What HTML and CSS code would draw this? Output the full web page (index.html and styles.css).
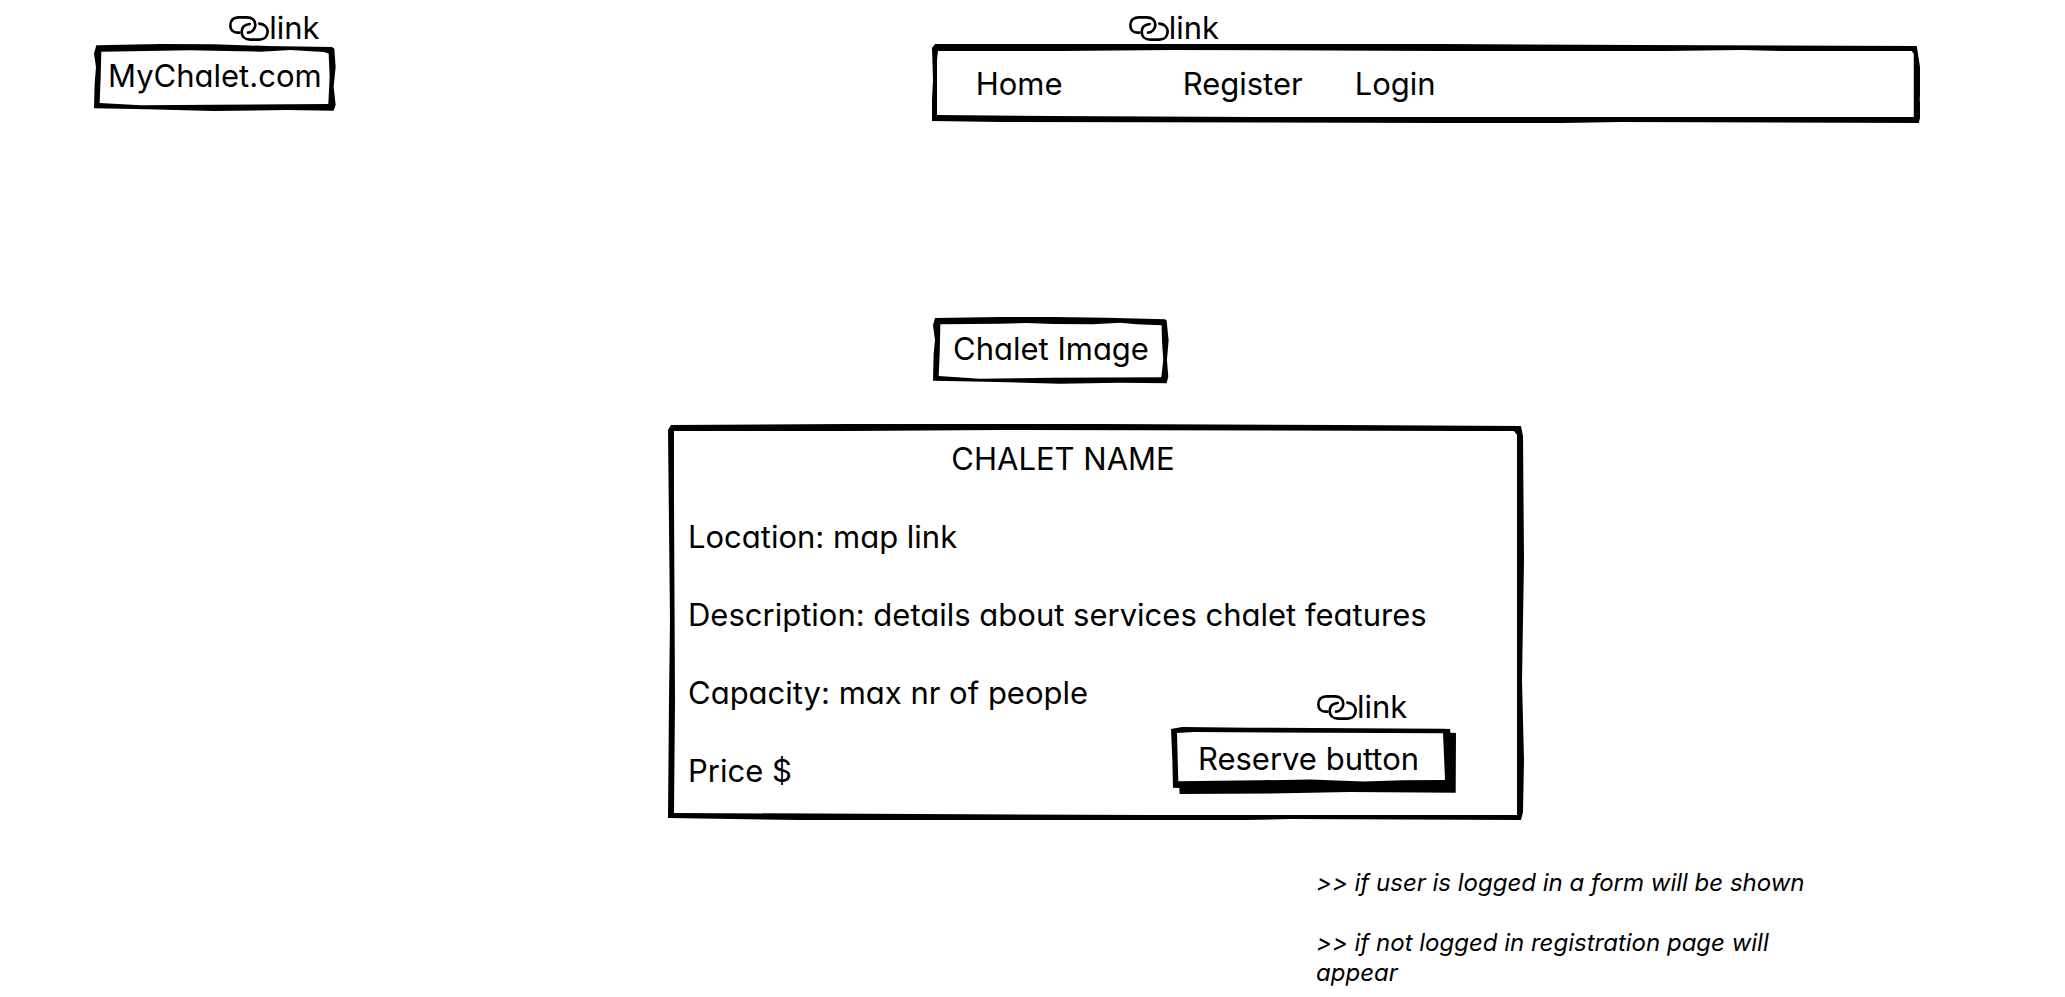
FILE: index.html
```html
<!DOCTYPE html>
<html lang="en">
<head>
<meta charset="utf-8">
<title>MyChalet.com</title>
<link rel="stylesheet" href="styles.css">
</head>
<body>
<svg class="symbols" aria-hidden="true">
  <symbol id="chain" viewBox="0 0 120 75">
    <path d="M30 50H25C12 50 4 41 4 28C4 13 13 4 28 4H53C70 4 79 13 79 26C79 40 68 50 57 50M62 24C47 26 38 34 38 47C38 62 49 71 64 71H91C107 71 116 61 116 46C116 34 106 24 91 23" fill="none" stroke="currentColor" stroke-width="8" stroke-linecap="round"/>
  </symbol>
</svg>

<header class="header">
  <div class="brand">
    <a class="tag" href="#home"><svg class="chain"><use href="#chain"/></svg>link</a>
    <a class="frame brand-box" href="#home">
      <svg class="outline" viewBox="40 131 726 202" preserveAspectRatio="none"><path d="M47 135L240 131L400 132L560 137L755 140L762 145L766 200L760 260L766 315L760 332L620 330L400 333L200 328L40 325L42 250L46 200L40 160ZM62 154L330 150L400 151L540 154L630 149L730 155L745 160L748 230L744 312L400 314L180 316L57 309L60 230Z"/></svg>
      <span>MyChalet.com</span>
    </a>
  </div>
  <div class="menu">
    <a class="tag menu-tag" href="#menu"><svg class="chain"><use href="#chain"/></svg>link</a>
    <nav class="frame menu-box" id="menu">
      <svg class="outline" viewBox="931 44 988 80" preserveAspectRatio="none"><path d="M934 44L1440 44L1640 45L1915 46L1919 72L1918 100L1919 115L1917 123L1620 122L1560 123L1440 123L1000 122L931 121L931 100L932 80L931 48ZM937 51L1060 51L1170 50L1440 51L1664 51L1740 50L1780 51L1910 51L1912 54L1912 117L1250 117L1050 116L936 115L936 60Z"/></svg>
      <a href="#home">Home</a>
      <a href="#register">Register</a>
      <a href="#login">Login</a>
    </nav>
  </div>
</header>

<main class="main">
  <div class="content">
    <div class="frame picture">
      <svg class="outline" viewBox="40 50 707 202" preserveAspectRatio="none"><path d="M46 53L240 50L400 50L560 52L735 57L740 60L746 120L741 180L745 230L740 250L600 248L420 251L200 245L40 242L42 160L46 120L40 75ZM62 72L240 70L320 68L400 71L520 72L600 67L650 72L725 75L726 120L730 180L724 232L400 233L180 236L57 228L60 160Z"/></svg>
      <span>Chalet Image</span>
    </div>
    <section class="frame card">
      <svg class="outline" viewBox="668 424 856 396" preserveAspectRatio="none"><path d="M671 425L850 424L1100 424L1340 425L1521 426L1523 436L1524 560L1522 680L1524 760L1523 812L1521 820L1290 819L1200 821L1000 821L800 820L668 818L669 700L670 620L668 430ZM674 431L850 431L1000 430L1460 431L1514 431L1517 435L1517 560L1517 815L1150 815L674 813L675 700L674 500Z"/></svg>
      <h1 class="name">CHALET NAME</h1>
      <p>Location: map link</p>
      <p class="wide">Description: details about services chalet features</p>
      <p>Capacity: max nr of people</p>
      <p>Price $</p>
      <div class="reserve">
        <a class="tag reserve-tag" href="#reserve"><svg class="chain"><use href="#chain"/></svg>link</a>
        <button class="frame reserve-button" id="reserve" type="button">
          <svg class="outline" viewBox="62 142 857 200" preserveAspectRatio="none"><path d="M62 148L95 142L300 144L880 147L901 148L902 159L919 160L918 338L600 336L400 340L88 342L87 324L68 323L66 240ZM80 160L130 157L880 161L886 300L760 301L640 305L480 299L330 301L84 304Z"/></svg>
          <span>Reserve button</span>
        </button>
      </div>
    </section>
  </div>
  <aside class="notes">
    <p>&gt;&gt; if user is logged in a form will be shown</p>
    <p>&gt;&gt; if not logged in registration page will appear</p>
  </aside>
</main>
</body>
</html>
```
FILE: styles.css
```css
* {
  box-sizing: border-box;
}

body {
  margin: 0;
  background: #fff;
  color: #000;
  font-family: Inter, Lato, sans-serif;
  font-size: 31px;
  /* single-storey "a" */
  font-feature-settings: "cv11";
  line-height: 39px;
}

a {
  color: inherit;
  text-decoration: none;
}

h1,
p {
  margin: 0;
  font-size: inherit;
  font-weight: inherit;
}

.symbols {
  display: none;
}

/* Hand-drawn outline stretched behind a box's content */
.frame {
  position: relative;
}

.outline {
  position: absolute;
  inset: 0;
  width: 100%;
  height: 100%;
  fill: currentColor;
  fill-rule: evenodd;
}

.frame > :not(.outline) {
  position: relative;
}

.tag {
  display: flex;
  align-items: center;
  line-height: 32px;
}

.chain {
  width: 40px;
  height: 25px;
}

.header {
  display: grid;
  grid-template-columns: 837fr 988fr;
  padding: 12px 7% 0 94px;
}

.brand {
  display: flex;
  flex-direction: column;
  align-items: flex-end;
  width: fit-content;
}

.brand .tag {
  padding-right: 16px;
}

.brand-box {
  display: block;
  padding: 12px 14px 16px;
}

.menu-tag {
  width: fit-content;
  margin-left: 197px;
}

.menu-box {
  display: grid;
  grid-template-columns: 207px 172px auto;
  padding: 20px 44px 21px;
}

.main {
  display: grid;
  grid-template-columns: 668fr 856fr 541fr;
  padding-top: 193px;
}

.content {
  grid-column: 2;
}

.picture {
  width: fit-content;
  margin-left: 265px;
  padding: 12px 20px 16px;
}

.card {
  display: grid;
  grid-template-columns: auto 285px;
  row-gap: 39px;
  margin-top: 40px;
  padding: 15px 68px 30px 20px;
}

.name,
.wide {
  grid-column: 1 / -1;
}

.name {
  padding-right: 18px;
  text-align: center;
}

.card p {
  grid-column-start: 1;
}

.reserve {
  grid-area: 4 / 2 / 6 / 3;
  align-self: end;
  margin-bottom: -4px;
}

.reserve-tag {
  width: fit-content;
  margin: 0 0 4px 146px;
}

.reserve-button {
  width: 100%;
  padding: 12px 30px 16px 20px;
  border: 0;
  background: none;
  color: inherit;
  font: inherit;
  font-feature-settings: inherit;
}

.notes {
  display: grid;
  grid-column: 2 / -1;
  gap: 30px;
  max-width: 1150px;
  margin-top: 48px;
  padding-left: 648px;
  font-size: 24px;
  font-style: italic;
  line-height: 30px;
}
```
